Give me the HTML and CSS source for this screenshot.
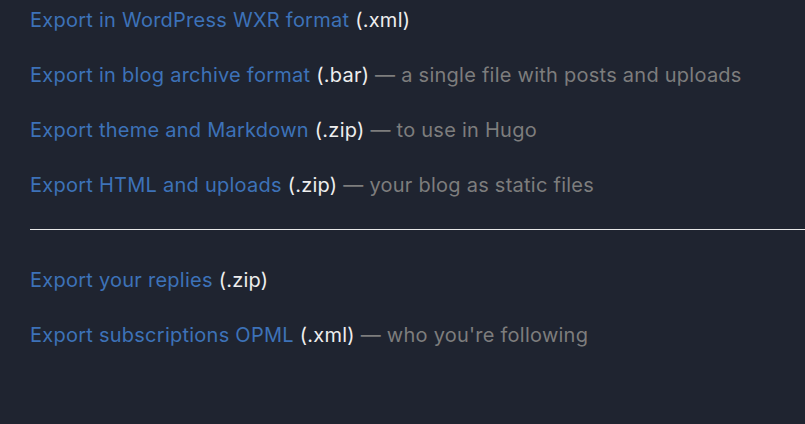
FILE: index.html
```html
<!DOCTYPE html>
<html>
<head>
<meta charset="utf-8">
<link rel="stylesheet" href="styles.css">
</head>
<body>
<div class="page">
  <div class="group">
    <p class="row"><a class="link" href="#">Export in WordPress WXR format</a> <span class="ext">(.xml)</span></p>
    <p class="row"><a class="link" href="#">Export in blog archive format</a> <span class="ext">(.bar)</span> <span class="note">— a single file with posts and uploads</span></p>
    <p class="row"><a class="link" href="#">Export theme and Markdown</a> <span class="ext">(.zip)</span> <span class="note">— to use in Hugo</span></p>
    <p class="row"><a class="link" href="#">Export HTML and uploads</a> <span class="ext">(.zip)</span> <span class="note">— your blog as static files</span></p>
  </div>
  <hr class="divider">
  <div class="group">
    <p class="row"><a class="link" href="#">Export your replies</a> <span class="ext">(.zip)</span></p>
    <p class="row"><a class="link" href="#">Export subscriptions OPML</a> <span class="ext">(.xml)</span> <span class="note">— who you're following</span></p>
  </div>
</div>
</body>
</html>
```
FILE: styles.css
```css
html, body {
  margin: 0;
  padding: 0;
  background: #1f2430;
}
body {
  font-family: Inter, "Liberation Sans", Arial, sans-serif;
  font-size: 20px;
  letter-spacing: 0.25px;
  overflow: hidden;
}
.page {
  padding: 9px 0 0 30px;
  height: 424px;
  box-sizing: border-box;
}
.group {
  display: flex;
  flex-direction: column;
  gap: 33px;
}
.row {
  margin: 0;
  line-height: 22px;
  white-space: nowrap;
}
.link {
  color: #3d72b8;
  text-decoration: none;
}
.ext {
  color: #eeeeee;
}
.note {
  color: #7d7d7d;
}
.divider {
  border: 0;
  border-top: 1px solid #e8e8e8;
  margin: 33px 0 39px 0;
  height: 0;
}
```
